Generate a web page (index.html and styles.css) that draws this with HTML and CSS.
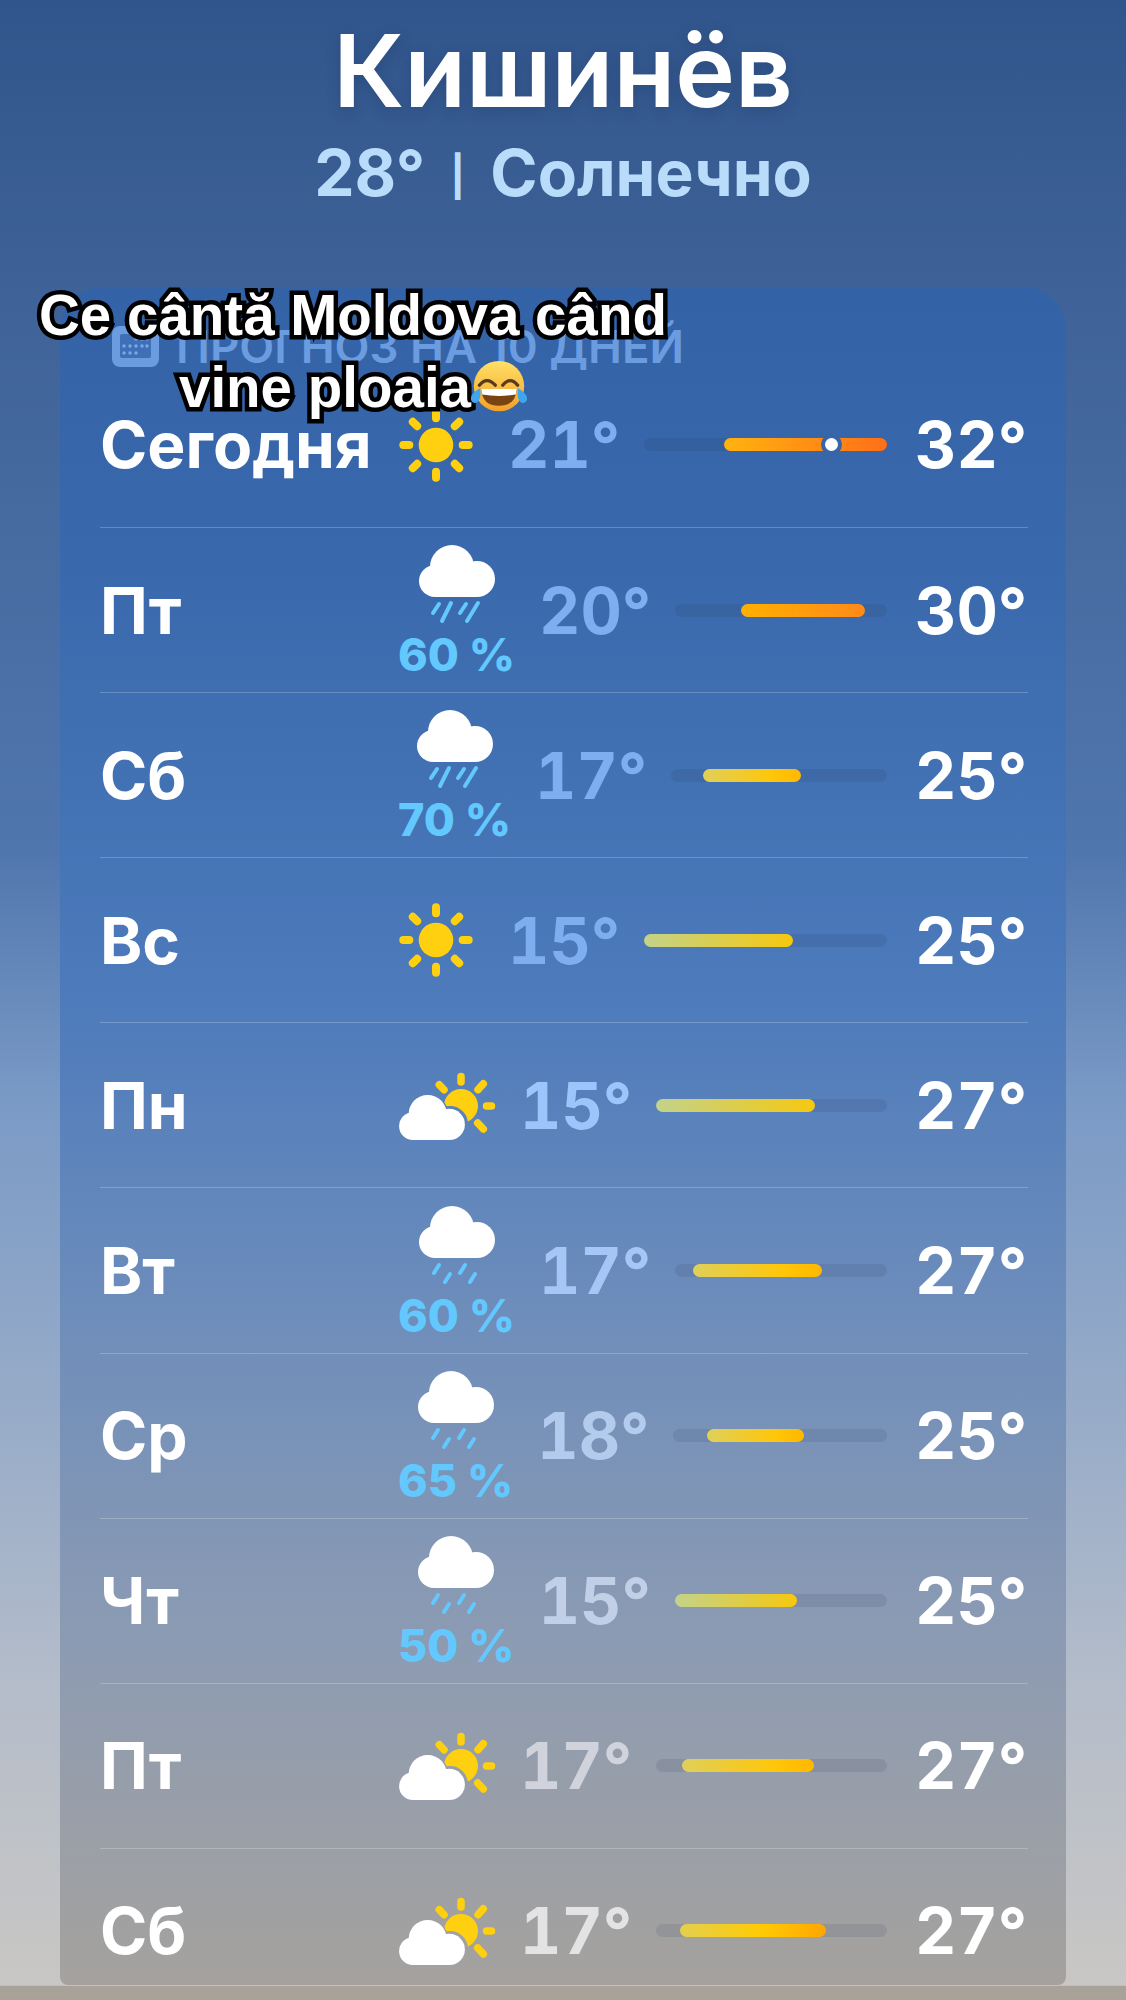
FILE: index.html
```html
<!DOCTYPE html>
<html lang="ru">
<head>
  <meta charset="UTF-8">
  <meta name="viewport" content="width=device-width, initial-scale=1.0">
  <title>Кишинёв</title>
  <link rel="stylesheet" href="styles.css">
</head>
<body>
  <svg class="defs" width="0" height="0">
    <defs>
      <symbol id="sun" viewBox="0 0 76 76">
        <circle cx="38" cy="38" r="17.3" fill="#ffd00f"/>
        <path d="M38 5.300V11.300M38 64.700V70.700M5.300 38H11.300M64.700 38H70.700M14.800 14.800L19.200 19.200M56.800 56.800L61.200 61.200M61.200 14.800L56.800 19.200M19.200 56.800L14.800 61.200" stroke="#ffd00f" stroke-width="8" stroke-linecap="round"/>
      </symbol>
      <symbol id="cloud" viewBox="0 0 76 52">
        <g fill="#fff">
          <circle cx="16" cy="36" r="16"/>
          <circle cx="33" cy="22" r="22"/>
          <circle cx="58" cy="34" r="18"/>
          <rect x="16" y="30" width="42" height="22"/>
        </g>
      </symbol>
      <symbol id="rain" viewBox="0 0 76 80">
        <use href="#cloud" width="76" height="52"/>
        <path d="M14 68L20 59M23 76L32 58M41 68L47 59M48 76L59 58" stroke="#62c8fd" stroke-width="4" stroke-linecap="round"/>
      </symbol>
      <symbol id="drizzle" viewBox="0 0 76 80">
        <use href="#cloud" width="76" height="52"/>
        <path d="M15 67L20 59M26 76L31 68M41 67L46 59M51 76L56 68" stroke="#62c8fd" stroke-width="4" stroke-linecap="round"/>
      </symbol>
      <mask id="behind-cloud" maskUnits="userSpaceOnUse" x="0" y="0" width="98" height="69">
        <rect width="98" height="69" fill="#fff"/>
        <g fill="#000" stroke="#000" stroke-width="4">
          <circle cx="14" cy="55" r="14"/>
          <circle cx="29" cy="43" r="19"/>
          <circle cx="52" cy="53" r="16"/>
        </g>
      </mask>
      <symbol id="partly" viewBox="0 0 98 69">
        <circle cx="63" cy="35" r="17" fill="#ffd00f" mask="url(#behind-cloud)"/>
        <path d="M63 5.500V11M88.500 35H93.500M80 18.700L85.300 12.700M79.700 52L85.300 58M41.300 13.700L46 18.700" stroke="#ffd00f" stroke-width="7.500" stroke-linecap="round"/>
        <use href="#cloud" x="0" y="24" width="68" height="45"/>
      </symbol>
    </defs>
  </svg>

  <div class="screen">
    <header class="city">
      <h1>Кишинёв</h1>
      <p>28° <span class="sep">|</span> Солнечно</p>
    </header>

    <section class="panel">
      <div class="panel-head">
        <svg class="cal" viewBox="0 0 47 41">
          <rect width="47" height="41" rx="8" fill="#6b9ce0"/>
          <rect x="8" y="8" width="31" height="24" rx="2" fill="#3f6fb6"/>
          <g fill="#7aa8e6">
            <circle cx="24" cy="13" r="1.700"/><circle cx="30" cy="13" r="1.700"/><circle cx="35" cy="13" r="1.700"/>
            <circle cx="12" cy="20" r="1.700"/><circle cx="18" cy="20" r="1.700"/><circle cx="24" cy="20" r="1.700"/><circle cx="30" cy="20" r="1.700"/><circle cx="35" cy="20" r="1.700"/>
            <circle cx="12" cy="27" r="1.700"/><circle cx="18" cy="27" r="1.700"/><circle cx="24" cy="27" r="1.700"/>
          </g>
        </svg>
        <span>ПРОГНОЗ НА 10 ДНЕЙ</span>
      </div>

      <div class="row">
        <div class="day">Сегодня</div>
        <div class="cond"><svg class="ic-sun"><use href="#sun"/></svg></div>
        <div class="low">21°</div>
        <div class="track"><div class="fill hot" style="left:32.8%;width:67.2%"></div><div class="now" style="left:77.2%"></div></div>
        <div class="high">32°</div>
      </div>
      <div class="row">
        <div class="day">Пт</div>
        <div class="cond"><svg class="ic-rain"><use href="#rain"/></svg><span class="pop">60 %</span></div>
        <div class="low">20°</div>
        <div class="track"><div class="fill warm" style="left:30.9%;width:58.8%"></div></div>
        <div class="high">30°</div>
      </div>
      <div class="row">
        <div class="day">Сб</div>
        <div class="cond"><svg class="ic-rain"><use href="#rain"/></svg><span class="pop">70 %</span></div>
        <div class="low">17°</div>
        <div class="track"><div class="fill mild" style="left:14.9%;width:45.2%"></div></div>
        <div class="high">25°</div>
      </div>
      <div class="row">
        <div class="day">Вс</div>
        <div class="cond"><svg class="ic-sun"><use href="#sun"/></svg></div>
        <div class="low">15°</div>
        <div class="track"><div class="fill cool" style="left:0%;width:61.2%"></div></div>
        <div class="high">25°</div>
      </div>
      <div class="row">
        <div class="day">Пн</div>
        <div class="cond"><svg class="ic-partly"><use href="#partly"/></svg></div>
        <div class="low">15°</div>
        <div class="track"><div class="fill cool" style="left:0%;width:69%"></div></div>
        <div class="high">27°</div>
      </div>
      <div class="row">
        <div class="day">Вт</div>
        <div class="cond"><svg class="ic-rain"><use href="#drizzle"/></svg><span class="pop">60 %</span></div>
        <div class="low">17°</div>
        <div class="track"><div class="fill mild" style="left:8.5%;width:61%"></div></div>
        <div class="high">27°</div>
      </div>
      <div class="row">
        <div class="day">Ср</div>
        <div class="cond"><svg class="ic-rain"><use href="#drizzle"/></svg><span class="pop">65 %</span></div>
        <div class="low">18°</div>
        <div class="track"><div class="fill mild" style="left:15.8%;width:45.5%"></div></div>
        <div class="high">25°</div>
      </div>
      <div class="row">
        <div class="day">Чт</div>
        <div class="cond"><svg class="ic-rain"><use href="#drizzle"/></svg><span class="pop">50 %</span></div>
        <div class="low">15°</div>
        <div class="track"><div class="fill cool" style="left:0%;width:57.7%"></div></div>
        <div class="high">25°</div>
      </div>
      <div class="row">
        <div class="day">Пт</div>
        <div class="cond"><svg class="ic-partly"><use href="#partly"/></svg></div>
        <div class="low">17°</div>
        <div class="track"><div class="fill mild" style="left:11%;width:57.5%"></div></div>
        <div class="high">27°</div>
      </div>
      <div class="row">
        <div class="day">Сб</div>
        <div class="cond"><svg class="ic-partly"><use href="#partly"/></svg></div>
        <div class="low">17°</div>
        <div class="track"><div class="fill warm-mild" style="left:10.5%;width:63%"></div></div>
        <div class="high">27°</div>
      </div>
    </section>
  </div>

  <div class="bottom-bar"></div>

  <div class="caption">
    <div>Ce cântă Moldova când</div>
    <div>vine ploaia<svg class="emoji" viewBox="0 0 60 60">
      <defs>
        <linearGradient id="face" x1="0" y1="0" x2="0" y2="1">
          <stop offset="0" stop-color="#ffe066"/>
          <stop offset="1" stop-color="#f3a02a"/>
        </linearGradient>
      </defs>
      <circle cx="30" cy="28" r="27" fill="url(#face)"/>
      <path d="M9 27Q17 17 26 27M34 27Q42 17 50 27" fill="none" stroke="#5a3a1a" stroke-width="3.500" stroke-linecap="round"/>
      <path d="M11 31H49Q48 49 30 49Q12 49 11 31Z" fill="#7a4312"/>
      <path d="M11 31H49L48 37Q30 40 12 37Z" fill="#fff"/>
      <path d="M10 30C10 36 11 41 7 45C3 48 -1 44 0 40C1 36 5 33 10 30ZM50 30C50 36 49 41 53 45C57 48 61 44 60 40C59 36 55 33 50 30Z" fill="#3da6ef"/>
    </svg></div>
  </div>
</body>
</html>
```

FILE: styles.css
```css
* {
  margin: 0;
  padding: 0;
  box-sizing: border-box;
}

body {
  position: relative;
  height: 2000px;
  overflow: hidden;
  font-family: Inter, "Liberation Sans", sans-serif;
  color: #fff;
  background: linear-gradient(#30558c 0, #3f6398 300px, #5076ae 850px, #7a9ac6 1100px, #98acc8 1420px, #b5bdca 1700px, #c9c7c4 1985px);
}

.defs {
  position: absolute;
}

.screen {
  height: 1985px;
  display: flex;
  flex-direction: column;
}

.city {
  height: 287px;
  padding-top: 8px;
  text-align: center;
}

.city h1 {
  font-size: 101px;
  font-weight: 600;
  line-height: 124px;
  text-shadow: 0 4px 14px rgba(20, 40, 80, 0.25);
}

.city p {
  margin-top: 3px;
  font-size: 64px;
  font-weight: 700;
  line-height: 76px;
  color: #b9dcfb;
}

.city .sep {
  margin: 0 10px;
  font-size: 40px;
  vertical-align: 5px;
}

.panel {
  flex: 1;
  margin: 0 60px;
  padding: 0 38px 0 40px;
  overflow: hidden;
  border-radius: 42px 42px 8px 8px;
  background: linear-gradient(#3362a6 0, #3a6aad 300px, #4c7abb 700px, #6b8cbb 1000px, #8c9bb3 1350px, #a5a29e 1698px);
}

.panel-head {
  height: 75px;
  padding-top: 44px;
  display: flex;
  align-items: center;
  gap: 17px;
  margin-left: 12px;
  font-size: 45.500px;
  font-weight: 600;
  color: #6b9ce0;
  white-space: nowrap;
}

.cal {
  flex: none;
  width: 47px;
  height: 41px;
}

.row {
  height: 165.100px;
  display: flex;
  align-items: center;
  gap: 24px;
  font-size: 64px;
  font-weight: 700;
  font-variant-numeric: tabular-nums;
  border-top: 1px solid rgba(255, 255, 255, 0.22);
}

.panel-head + .row {
  border-top: none;
}

.day {
  width: 274px;
  font-size: 64px;
  white-space: nowrap;
}

.cond {
  display: flex;
  flex-direction: column;
  align-items: center;
  flex: none;
}

.ic-sun {
  width: 76px;
  height: 76px;
  margin-right: 10px;
}

.ic-rain {
  width: 76px;
  height: 80px;
}

.ic-partly {
  width: 98px;
  height: 69px;
}

.pop {
  margin-top: 10px;
  font-size: 45px;
  line-height: 40px;
  font-weight: 800;
  font-variant-numeric: normal;
  color: #62c8fd;
  white-space: nowrap;
}

.low {
  flex: none;
  color: #7eaeef;
}

.row:nth-child(6) .low { color: #9cc5fb; }
.row:nth-child(7) .low { color: #a6c6f5; }
.row:nth-child(8) .low { color: #b3cbed; }
.row:nth-child(9) .low { color: #c1d0e6; }
.row:nth-child(10) .low { color: #d0d3dc; }
.row:nth-child(11) .low { color: #e3e3e3; }

.track {
  position: relative;
  flex: 1;
  height: 13px;
  border-radius: 7px;
  background: rgba(40, 50, 70, 0.11);
}

.fill {
  position: absolute;
  top: 0;
  bottom: 0;
  border-radius: 7px;
}

.hot {
  background: linear-gradient(90deg, #ffb30f, #ff6f1a);
}

.warm {
  background: linear-gradient(90deg, #ffb000, #ff8a1a);
}

.mild {
  background: linear-gradient(90deg, #dfd05a, #ffc60a 70%, #ffb800);
}

.cool {
  background: linear-gradient(90deg, #c3d38a, #f6c80f);
}

.warm-mild {
  background: linear-gradient(90deg, #e3cf50, #ffcb05 55%, #ffa600);
}

/* ring is the panel colour, cuts the dot out of the bar */
.now {
  position: absolute;
  top: 50%;
  width: 13px;
  height: 13px;
  margin: -6.500px 0 0 -6.500px;
  border-radius: 50%;
  background: #fff;
  box-shadow: 0 0 0 4px #3765a8;
}

.high {
  width: 110px;
  margin: 0 3px 0 4px;
  text-align: right;
  white-space: nowrap;
}

.bottom-bar {
  height: 15px;
  background: #a8a298;
  border-top: 1px solid #c5c0b0;
}

/* video caption, sits on top of the panel */
.caption {
  position: absolute;
  left: 23px;
  top: 280px;
  width: 660px;
  text-align: center;
  font-family: "Liberation Sans", Arial, sans-serif;
  font-size: 56.500px;
  font-weight: 700;
  line-height: 72px;
  color: #fff;
  -webkit-text-stroke: 9px #000;
  paint-order: stroke fill;
  white-space: nowrap;
}

.emoji {
  width: 56px;
  height: 56px;
  vertical-align: -9px;
}
```
